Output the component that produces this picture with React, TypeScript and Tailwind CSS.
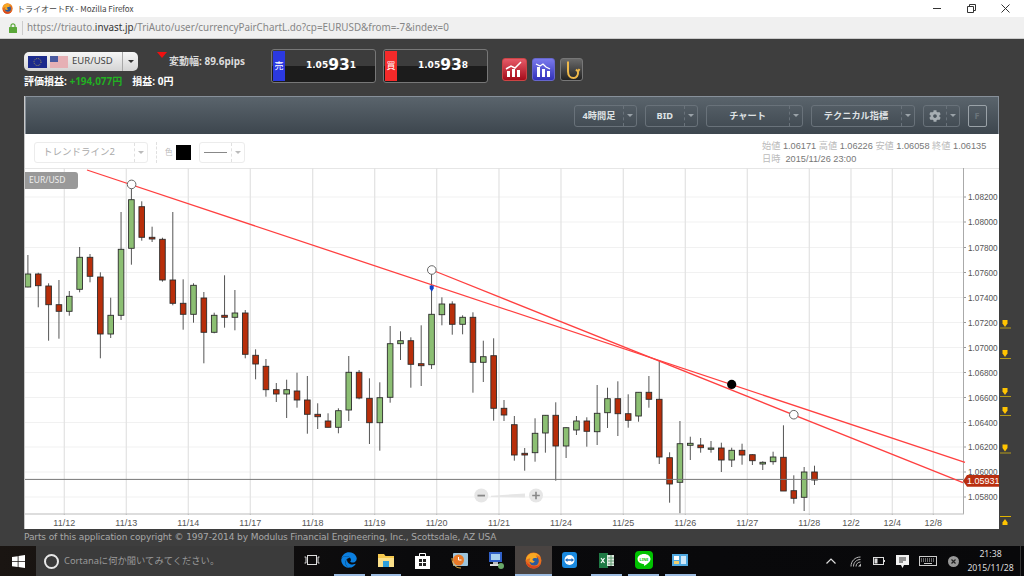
import { FaCog, FaEdge } from "react-icons/fa";

// wickTop, wickBottom, bodyTop, bodyBottom, up (1 = green)
const candles: number[][] = [
  [255, 287.3, 274, 287, 1], [272.7, 307.3, 274, 285.7, 0], [283.3, 340.7, 286, 304.7, 0], [280, 338.7, 304.7, 311.3, 0],
  [291, 315.7, 296.3, 311.3, 1], [247, 292.3, 257.3, 289.3, 1], [254, 282.3, 257.3, 276.3, 0], [272.3, 358.3, 277, 334, 0],
  [297.7, 338, 315.3, 334, 1], [212, 320, 249.3, 315.3, 1], [188.3, 264.7, 199.7, 248.3, 1], [201.3, 240.7, 206.7, 237.3, 0],
  [226.7, 242, 237.3, 239, 0], [237.7, 281.7, 239.3, 280, 0], [212, 305.3, 280, 303.3, 0], [279.3, 329.7, 303.3, 314.3, 0],
  [283.3, 322.7, 285.3, 314.3, 1], [292, 363.3, 298, 332.3, 0], [312.7, 333.3, 315.3, 332.3, 1], [275.3, 327.7, 315.3, 317.3, 0],
  [290, 330.3, 313, 317.3, 1], [310, 358.3, 313, 354.3, 0], [349.3, 379.3, 355.3, 364, 0], [359, 396.7, 366.3, 389.7, 0],
  [383, 402, 389.7, 394, 0], [379.7, 418, 389.7, 394, 1], [372.7, 407.7, 391, 400, 0], [376, 433.7, 400, 414.3, 0],
  [403.3, 429, 414.3, 416.7, 0], [413.3, 427.3, 421, 427.3, 0], [408.3, 433.3, 410.7, 427.3, 1], [356, 421, 372.3, 410, 1],
  [370, 399.3, 372.3, 398, 0], [378.3, 444, 398.3, 422.7, 0], [382.3, 450.7, 397.7, 422.7, 1], [326, 402.7, 343.7, 397.3, 1],
  [331.3, 360, 340.7, 343.7, 1], [337.3, 387.7, 340.7, 364.3, 0], [325.3, 386, 363.7, 365.7, 0], [274, 369, 314.3, 364.7, 1],
  [297.3, 325.3, 304, 314.7, 1], [301.3, 334.7, 304, 324.3, 0], [315.3, 334.3, 317.3, 324.3, 1], [312.3, 392.7, 317.3, 362.3, 0],
  [340.7, 382, 356.7, 362.3, 1], [338.3, 420.7, 355.7, 408.3, 0], [400, 421, 408.3, 415, 0], [416, 460.7, 424.7, 455, 0],
  [448, 470.7, 453.3, 455, 0], [418.3, 461.7, 433.3, 452.7, 1], [415, 452.7, 415.3, 433, 1], [402.3, 480.7, 415.3, 446, 0],
  [427.3, 458, 427.7, 446, 1], [416, 435, 421, 430, 1], [417.3, 446.7, 421, 431.3, 0], [385, 445, 413.3, 431.7, 1],
  [387.7, 428, 398.7, 412.7, 1], [381.3, 436, 398.7, 413.7, 0], [394.3, 427.7, 413.7, 420.3, 0], [392.3, 421.7, 392.3, 416, 1],
  [376, 407.7, 392.3, 399.3, 0], [360.7, 464, 399.3, 457, 0], [452.3, 502.7, 457.7, 484, 0], [421, 513.3, 443.7, 482.3, 1],
  [436.7, 460, 443.3, 445.3, 1], [438, 452.7, 445, 447.7, 0], [441, 452.7, 448, 449.3, 1], [442.7, 472, 448, 460, 0],
  [447.7, 467, 450.3, 460, 1], [443.7, 464.7, 450.3, 455, 0], [454.3, 465, 454.7, 460.7, 0], [461.3, 470, 462.3, 464, 1],
  [451.7, 464.7, 457, 461.7, 1], [425.3, 491, 457.3, 491, 0], [475.3, 503.7, 490.7, 498.3, 0], [467, 511, 472, 497.3, 1],
  [465.7, 485, 472, 480, 0],
];

const dateLines: [number, string][] = [
  [64.3, "11/12"], [126.3, "11/13"], [188.3, "11/14"], [250.3, "11/17"], [312.7, "11/18"], [374.7, "11/19"],
  [436.7, "11/20"], [499, "11/21"], [561, "11/24"], [623.3, "11/25"], [685.3, "11/26"], [747.3, "11/27"],
  [809.3, "11/28"], [851, "12/2"], [892.3, "12/4"], [933.3, "12/8"],
];

const priceLines: [number, string][] = [
  [197, "1.08200"], [222, "1.08000"], [247.5, "1.07800"], [272.5, "1.07600"], [297.5, "1.07400"], [322.5, "1.07200"],
  [347.5, "1.07000"], [372.5, "1.06800"], [397.5, "1.06600"], [422.5, "1.06400"], [447, "1.06200"], [472, "1.06000"],
  [497, "1.05800"],
];

const Chart = () => (
  <svg viewBox="25 168 974 347" width={974} height={347} className="block font-[family-name:'Liberation_Sans',sans-serif]">
    <line x1={25} x2={999} y1={168.5} y2={168.5} stroke="#e6e6e6" />
    {priceLines.map(([y, label]) => (
      <g key={label}>
        <line x1={25} x2={963} y1={y} y2={y} stroke="#f1f1f1" />
        <line x1={963} x2={966} y1={y} y2={y} stroke="#999" />
        <text x={968} y={y + 3} fontSize={8.2} fill="#555">{label}</text>
      </g>
    ))}
    {dateLines.map(([x, label]) => (
      <line key={label} x1={x} x2={x} y1={168} y2={514} stroke="#e2e2e2" strokeWidth={1.2} />
    ))}
    {candles.map(([wt, wb, bt, bb, up], i) => {
      const x = 27.9 + 10.35 * i;
      return (
        <g key={i}>
          <line x1={x} x2={x} y1={wt} y2={wb} stroke="#555" />
          <rect x={x - 2.8} y={bt} width={5.6} height={bb - bt} fill={up ? "#8cbf73" : "#b82e0a"} stroke="#2c2c2c" strokeWidth={0.9} />
        </g>
      );
    })}
    <line x1={25} x2={963} y1={479.4} y2={479.4} stroke="#777" />
    <line x1={963.5} x2={963.5} y1={168} y2={514} stroke="#aaa" />
    <line x1={25} x2={964} y1={514} y2={514} stroke="#bbb" />
    <line x1={87} y1={170} x2={965} y2={462.3} stroke="#ff4040" strokeWidth={1.3} />
    <line x1={432} y1={270} x2={963} y2={482.7} stroke="#ff4040" strokeWidth={1.3} />
    <circle cx={131.6} cy={184.4} r={4.3} fill="#fff" stroke="#666" />
    <circle cx={431.8} cy={270} r={4.3} fill="#fff" stroke="#666" />
    <circle cx={793.8} cy={414.7} r={4.3} fill="#fff" stroke="#666" />
    <circle cx={731.7} cy={384.4} r={4.6} fill="#000" />
    <path d="M429.7 285.5h4v3l-2 3.2-2-3.2z" fill="#1144cc" />
    <circle cx={481.3} cy={495.5} r={7} fill="#e6e6e6" />
    <rect x={477.5} y={494.7} width={7.5} height={1.8} fill="#888" />
    <path d="M491 495.7L525 493.5V497.5L491 497z" fill="#e6e6e6" />
    <circle cx={536} cy={495.5} r={7} fill="#e6e6e6" />
    <path d="M532.2 494.7h3v-3h1.6v3h3v1.6h-3v3h-1.6v-3h-3z" fill="#888" />
    <path d="M963 481l4-6h32v11.7h-32z" fill="#b92f10" />
    <text x={967} y={484} fontSize={9} fill="#fff">1.05931</text>
    {dateLines.map(([x, label]) => (
      <line key={label} x1={x} x2={x} y1={514} y2={515} stroke="#bbb" />
    ))}
  </svg>
);

const SplitButton = ({ w, arrow, children }: { w: string; arrow: string; children: React.ReactNode }) => (
  <div className={`flex h-[22px] rounded-[3px] border border-[#69727a] text-[#dfe2e4] text-[9.2px] font-bold ${w}`}>
    <div className="flex-1 flex items-center justify-center">{children}</div>
    <div className={`flex items-center justify-center border-l border-dashed border-[#69727a] ${arrow}`}>
      <div className="w-0 h-0 border-x-[3px] border-x-transparent border-t-[3px] border-t-[#9aa2a8]" />
    </div>
  </div>
);

const PriceBox = ({ color, label, last }: { color: string; label: string; last: string }) => (
  <div className="relative w-[105px] h-[34px] rounded-[3px] border border-[#777] flex bg-[linear-gradient(#3c3c3c_0,#3c3c3c_50%,#1c1c1c_50%,#1c1c1c_100%)]">
    <div className={`w-[12px] my-px ml-px flex items-center justify-center text-white text-[9px] ${color}`}>{label}</div>
    <div className="flex-1 flex items-center justify-end pr-[19px] text-white font-bold text-[9px] font-[family-name:'DejaVu_Sans',sans-serif]">
      <span>1.05</span>
      <span className="text-[15.5px] leading-none">93</span>
      <span>{last}</span>
    </div>
  </div>
);

const FirefoxIcon = ({ size }: { size: number }) => (
  <svg width={size} height={size} viewBox="0 0 16 16">
    <circle cx={8} cy={8} r={7.5} fill="#e8701f" />
    <circle cx={8.6} cy={8.4} r={4.4} fill="#2b5a9c" />
    <path d="M1 8c0-4 3-7 7-7 3 0 5.500 1.500 6.500 4-1.500-1.500-3-2-4.500-1.500 1 .5 1.500 1.500 1.200 2.500-1-.5-3.200-.5-4 .5-.5 1 .5 2 2 2.200-1 1.500-3 2-4.200.8C3.500 9.500 4 7 5 6c-1.500 0-3.500.5-4 2z" fill="#f7a823" />
    <path d="M1 9c.5 4 3.500 6.500 7 6.500 3 0 6-2 7-5.500-1.500 2.500-4 3.800-6.500 3.300C5.500 13 3 12 1 9z" fill="#d8431d" />
  </svg>
);

const TaskCell = ({ active, highlight, children }: { active?: boolean; highlight?: boolean; children: React.ReactNode }) => (
  <div className={`w-[36.8px] h-full flex flex-col ${highlight ? "bg-[#4a4442]" : ""}`}>
    <div className="flex-1 flex items-center justify-center">{children}</div>
    <div className={`h-[2px] ${highlight ? "" : "mx-[3px]"} ${active ? "bg-[#9cbbe0]" : ""}`} />
  </div>
);

const TrayCell = ({ w, children }: { w: string; children: React.ReactNode }) => (
  <div className={`h-full flex items-center justify-center ${w}`}>{children}</div>
);

const markers: { y: number; lineY: number }[] = [
  { y: 320, lineY: 328 },
  { y: 350, lineY: 358.5 },
  { y: 388, lineY: 396.5 },
  { y: 407, lineY: 415.5 },
  { y: 444.5, lineY: 453 },
];

const MarkerStrip = () => (
  <svg viewBox="999 96 25 432" width={25} height={432} className="block">
    {markers.map((m) => (
      <g key={m.y}>
        <path d={`M1002.500 ${m.y}h5v3.500l-2.500 3.500-2.500-3.500z`} fill="#ffc400" />
        <line x1={1000} x2={1011} y1={m.lineY} y2={m.lineY} stroke="#b39a1a" />
      </g>
    ))}
    <line x1={1000} x2={1011} y1={516.5} y2={516.5} stroke="#e0b400" />
    <path d="M1005 519l2.500 3.500v2.500h-5v-2.500z" fill="#ffc400" />
  </svg>
);

const App = () => {
  return (
    <div className="w-[1024px] h-[576px] overflow-hidden flex flex-col bg-[#3e3e3e] font-[family-name:'Noto_Sans','Noto_Sans_CJK_JP',sans-serif]">
      {/* title bar */}
      <div className="h-[17px] bg-white flex items-center pl-[2px] text-[8px] text-[#444] shrink-0">
        <FirefoxIcon size={11} />
        <span className="ml-[4px] font-[family-name:'Noto_Sans_CJK_JP',sans-serif]">トライオートFX - Mozilla Firefox</span>
        <div className="ml-auto flex items-center text-[#333]">
          <div className="w-[34px] flex justify-center"><div className="w-[8px] h-px bg-[#333]" /></div>
          <div className="w-[34px] flex justify-center">
            <svg width={9} height={9} viewBox="0 0 9 9" fill="none" stroke="#333"><path d="M.5 2.500h6v6h-6zM2.500 2.500v-2h6v6h-2" /></svg>
          </div>
          <div className="w-[34px] flex justify-center mr-[2px]">
            <svg width={9} height={9} viewBox="0 0 9 9" stroke="#333"><path d="M.5.5l8 8M8.500.5l-8 8" /></svg>
          </div>
        </div>
      </div>
      {/* url bar */}
      <div className="h-[22px] bg-[#f0f0f0] border-b border-[#ccc] flex items-center pl-[9px] text-[9.85px] text-[#858585] shrink-0">
        <svg width={8} height={10} viewBox="0 0 8 10">
          <path d="M2 4V2.800a2 2 0 0 1 4 0V4" fill="none" stroke="#5ba83a" strokeWidth={1.2} />
          <rect y={4} width={8} height={6} rx={0.5} fill="#5ba83a" />
        </svg>
        <div className="ml-[5px] w-px h-[14px] bg-[#ccc]" />
        <span className="ml-[4px]">https://triauto.<span className="text-[#333]">invast.jp</span>/TriAuto/user/currencyPairChartL.do?cp=EURUSD&amp;from=-7&amp;index=0</span>
      </div>

      <div className="flex-1 flex flex-col min-h-0">
        {/* header */}
        <div className="h-[57px] pl-[24px] flex items-start shrink-0">
          <div className="w-[247px] pt-[13px] text-[10px] font-bold text-[#dcdcdc]">
            <div className="flex items-center">
              <div className="w-[114px] h-[19px] rounded-[5px] bg-[linear-gradient(#f6f6f6,#d4d4d4)] flex items-center pl-[4px] font-normal text-[9.5px] text-[#444]">
                <svg width={19} height={12} viewBox="0 0 19 12">
                  <rect width={19} height={12} fill="#1b2a8c" />
                  <circle cx={9.500} cy={6} r={3.500} fill="none" stroke="#c9b845" strokeWidth={0.8} strokeDasharray="1 1.100" />
                </svg>
                <svg width={18} height={12} viewBox="0 0 18 12" className="ml-[3px]">
                  <rect width={18} height={12} fill="#f4f0f0" />
                  <path d="M0 1h18M0 3h18M0 5h18M0 7h18M0 9h18M0 11h18" stroke="#d8707a" />
                  <rect width={8} height={6} fill="#4a5aa0" />
                </svg>
                <span className="ml-[4px] w-[50px]">EUR/USD</span>
                <div className="h-full w-px bg-[#a8a8a8]" />
                <div className="flex-1 flex justify-center">
                  <div className="w-0 h-0 border-x-[3.5px] border-x-transparent border-t-[3.5px] border-t-[#333]" />
                </div>
              </div>
              <div className="ml-[19px] -mt-[13px] w-0 h-0 border-x-[5px] border-x-transparent border-t-[6px] border-t-[#f01010]" />
              <span className="ml-[2px] -mt-[1px] text-[10px] whitespace-nowrap">変動幅: 89.6pips</span>
            </div>
            <div className="mt-[3px] whitespace-nowrap text-[10px] text-white">
              評価損益: <span className="text-[#22b022]">+194,077円</span>
              <span className="ml-[10px]">損益: 0円</span>
            </div>
          </div>
          <div className="mt-[10px] flex gap-[7px]">
            <PriceBox color="bg-[#2b39e0]" label="売" last="1" />
            <PriceBox color="bg-[#f52a2a]" label="買" last="8" />
          </div>
          <div className="mt-[19px] ml-[14px] flex gap-[5px]">
            <div className="w-[25px] h-[23px] rounded-[3px] bg-[linear-gradient(#e65a68,#a50c1a)] border border-[#c44] flex items-center justify-center">
              <svg width={19} height={17} viewBox="0 0 19 17" fill="#fff">
                <rect x={2} y={10} width={3} height={6} /><rect x={7} y={8} width={3} height={8} /><rect x={12} y={9} width={3} height={7} />
                <path d="M1 8l5-3 4 2 6-6" fill="none" stroke="#fff" strokeWidth={1.5} />
              </svg>
            </div>
            <div className="w-[23px] h-[23px] rounded-[3px] bg-[linear-gradient(#7a7aec,#3232bc)] border border-[#66c] flex items-center justify-center">
              <svg width={17} height={17} viewBox="0 0 17 17" fill="#fff">
                <rect x={2} y={6} width={3} height={10} /><rect x={7} y={8} width={3} height={8} /><rect x={12} y={10} width={3} height={6} />
                <path d="M1 3l4 2 3-2 3 3 4 2" fill="none" stroke="#fff" strokeWidth={1.3} />
              </svg>
            </div>
            <div className="w-[23px] h-[23px] rounded-[3px] bg-[linear-gradient(#6a6a6a,#222)] border border-[#777] flex items-center justify-center">
              <svg width={19} height={20} viewBox="0 0 19 20" fill="none">
                <path d="M6 1.500v10c0 4 2.500 6.500 5.500 6.500s5-3 4.500-6.500L14 9.500M16 11.500l1.500-2.500" stroke="#eeb84a" strokeWidth={2} />
              </svg>
            </div>
          </div>
        </div>

        {/* chart row */}
        <div className="flex pl-[24px]">
          <div className="w-[975px] flex flex-col border-l border-[#c8c8c8] bg-white">
            <div className="h-[38px] flex items-center justify-end gap-2 pr-[11.5px] border-t border-x border-[#87909a] bg-[linear-gradient(#5a646c,#3d464e)]">
              <SplitButton w="w-[63px]" arrow="w-[13px]">4時間足</SplitButton>
              <SplitButton w="w-[52.5px]" arrow="w-[13px]">BID</SplitButton>
              <SplitButton w="w-[97px]" arrow="w-[13px]">チャート</SplitButton>
              <SplitButton w="w-[104px]" arrow="w-[13px]">テクニカル指標</SplitButton>
              <SplitButton w="w-[37px]" arrow="w-[13px]"><FaCog size={12} color="#a7aeb3" /></SplitButton>
              <div className="w-[19px] h-[22px] rounded-[2px] border border-[#9aa2a8] flex items-center justify-center text-[9px] font-bold text-[#6b747b]">F</div>
            </div>
            <div className="h-[34px] flex items-center pl-[9px] pr-[14px] pt-[3px]">
              <div className="w-[114px] h-[21px] rounded-[3px] border border-[#ececec] flex items-center text-[9.5px] text-[#aaa]">
                <span className="flex-1 pl-[8px]">トレンドライン2</span>
                <div className="w-[13px] h-full border-l border-dashed border-[#e0e0e0] flex items-center justify-center">
                  <div className="w-0 h-0 border-x-[3px] border-x-transparent border-t-[3px] border-t-[#bbb]" />
                </div>
              </div>
              <div className="ml-[8px] h-[21px] border-l border-dashed border-[#e0e0e0]" />
              <span className="ml-[8px] text-[7.5px] text-[#bbb]">色</span>
              <div className="ml-[3px] w-[15px] h-[15px] bg-black" />
              <div className="ml-[8px] w-[46px] h-[21px] rounded-[3px] border border-[#ececec] flex items-center">
                <div className="flex-1 flex justify-center"><div className="w-[23px] h-px bg-[#888]" /></div>
                <div className="w-[13px] h-full border-l border-dashed border-[#e0e0e0] flex items-center justify-center">
                  <div className="w-0 h-0 border-x-[3px] border-x-transparent border-t-[3px] border-t-[#bbb]" />
                </div>
              </div>
              <div className="ml-auto w-[223px] text-[9.2px] leading-[12.5px] text-[#777] font-[family-name:'Liberation_Sans','Noto_Sans_CJK_JP',sans-serif]">
                <div className="whitespace-nowrap">
                  <span className="text-[#bbb]">始値</span> 1.06171 <span className="text-[#bbb]">高値</span> 1.06226 <span className="text-[#bbb]">安値</span> 1.06058 <span className="text-[#bbb]">終値</span> 1.06135
                </div>
                <div className="whitespace-nowrap"><span className="text-[#bbb]">日時</span>&nbsp; 2015/11/26 23:00</div>
              </div>
            </div>
            <div className="relative">
              <Chart />
              <div className="absolute left-0 top-[4px] w-[53px] h-[17px] rounded-r-[3px] bg-[#999] flex items-center pl-[4px] text-[8.5px] text-[#eee]">EUR/USD</div>
            </div>
            <div className="h-[14px] relative font-[family-name:'Liberation_Sans',sans-serif] text-[9px] text-[#555]">
              {dateLines.map(([x, label]) => (
                <span key={label} className="absolute top-[2px] -translate-x-1/2" style={{ left: x - 25 }}>{label}</span>
              ))}
            </div>
          </div>
          <div className="flex-1 min-w-0"><MarkerStrip /></div>
        </div>

        <div className="pl-[24px] pt-[1px] text-[9px] leading-[15px] text-[#a8a8a8] whitespace-nowrap font-[family-name:'DejaVu_Sans',sans-serif] tracking-[-0.1px]">
          Parts of this application copyright © 1997-2014 by Modulus Financial Engineering, Inc., Scottsdale, AZ USA
        </div>
      </div>

      {/* taskbar */}
      <div className="h-[30px] shrink-0 bg-[linear-gradient(90deg,#1a1512,#0a0a0c_40%,#08080a)] flex items-center text-white">
        <div className="w-[36px] h-full flex items-center justify-center">
          <svg width={13} height={13} viewBox="0 0 13 13" fill="#fff">
            <path d="M0 2l5.700-.8v5H0zM6.500 1.100L13 0v6.200H6.500zM0 7h5.700v5L0 11.200zM6.500 7H13v6l-6.500-.9z" />
          </svg>
        </div>
        <div className="w-[258px] h-full bg-[#3b3b3b] flex items-center pl-[8px]">
          <div className="w-[15px] h-[15px] rounded-full border-2 border-[#e8e8e8]" />
          <span className="ml-[5px] text-[9.3px] text-[#999] whitespace-nowrap font-[family-name:'Noto_Sans','Noto_Sans_CJK_JP',sans-serif]">Cortanaに何か聞いてみてください。</span>
        </div>
        <TaskCell>
          <svg width={16} height={10} viewBox="0 0 16 10" fill="none" stroke="#ddd"><rect x={3.500} y={.5} width={9} height={9} /><path d="M.5 2h1.500v6H.5M15.500 2H14v6h1.500" /></svg>
        </TaskCell>
        <TaskCell active><FaEdge size={16} color="#0b7fe0" /></TaskCell>
        <TaskCell active>
          <svg width={16} height={14} viewBox="0 0 16 14">
            <path d="M0 1h6l1.500 2H16v11H0z" fill="#f6c94e" /><rect y={5} width={16} height={9} fill="#fbe08a" /><rect x={5} y={8} width={6} height={6} fill="#2fa0dc" />
          </svg>
        </TaskCell>
        <TaskCell>
          <svg width={15} height={17} viewBox="0 0 15 17" fill="#fff">
            <path d="M0 4h15v13H0z" /><path d="M4.500 4V1.500h6V4" fill="none" stroke="#fff" />
            <path d="M4 7h3v3H4zM8 7h3v3H8zM4 11h3v3H4zM8 11h3v3H8z" fill="#222" />
          </svg>
        </TaskCell>
        <TaskCell>
          <svg width={17} height={17} viewBox="0 0 17 17">
            <rect x={2} y={1} width={15} height={13} rx={1} fill="#9cc4dc" /><circle cx={7.500} cy={8} r={5.500} fill="#ea7a28" />
            <path d="M7.500 5v3h3" stroke="#fff" fill="none" /><path d="M1 6c0 6 3 10 9 10" stroke="#e8b040" fill="none" />
          </svg>
        </TaskCell>
        <TaskCell>
          <svg width={16} height={18} viewBox="0 0 16 18">
            <rect x={1} y={1} width={13} height={10} fill="#3060c8" /><rect x={3} y={3} width={9} height={6} fill="#a8d0f0" />
            <rect x={5} y={11} width={5} height={2} fill="#bbb" /><rect x={2} y={13} width={11} height={2} fill="#ddd" /><circle cx={13} cy={15} r={3} fill="#6aa868" />
          </svg>
        </TaskCell>
        <TaskCell active highlight><FirefoxIcon size={17} /></TaskCell>
        <TaskCell>
          <svg width={15} height={16} viewBox="0 0 15 16">
            <rect width={15} height={16} rx={3} fill="#1a8ae0" /><circle cx={7.500} cy={8} r={5} fill="#fff" />
            <path d="M3 8l2.500-2v1.300h4V6L12 8 9.500 10V8.700h-4V10z" fill="#1a6ac0" />
          </svg>
        </TaskCell>
        <TaskCell active>
          <svg width={17} height={17} viewBox="0 0 17 17">
            <rect x={1} y={1} width={9} height={15} fill="#1f7a45" /><rect x={9} y={3} width={7} height={11} fill="#dfe8e0" />
            <path d="M10 6h6M10 9h6M10 12h6M13 3v11" stroke="#5e9a70" /><path d="M3 6l3.500 5M6.500 6L3 11" stroke="#fff" strokeWidth={1.2} />
          </svg>
        </TaskCell>
        <TaskCell active>
          <svg width={18} height={18} viewBox="0 0 18 18">
            <rect width={18} height={18} rx={4} fill="#00c300" />
            <path d="M9 3c3.800 0 6.500 2.200 6.500 5 0 3-4 5.500-6.500 7 .5-1.500 0-2-1-2C4.500 12.500 2.500 10.500 2.500 8c0-2.800 2.700-5 6.500-5z" fill="#fff" />
            <text x={9} y={9.500} textAnchor="middle" fontSize={3.800} fontWeight={700} fill="#00c300">LINE</text>
          </svg>
        </TaskCell>
        <TaskCell active>
          <svg width={16} height={12} viewBox="0 0 16 12">
            <rect width={16} height={12} fill="#4fa8e0" /><rect x={2} y={2} width={5} height={4} fill="#fff" /><rect x={9} y={2} width={5} height={8} fill="#cfe8f8" /><rect x={2} y={7} width={5} height={3} fill="#f0d070" />
          </svg>
        </TaskCell>

        <div className="ml-auto h-full flex items-center">
          <TrayCell w="w-[25px]">
            <svg width={10} height={6} viewBox="0 0 10 6" fill="none" stroke="#ddd" strokeWidth={1.2}><path d="M.5 5.500L5 1l4.500 4.500" /></svg>
          </TrayCell>
          <TrayCell w="w-[24px]">
            <svg width={11} height={11} viewBox="0 0 11 11" fill="none" stroke="#bbb"><path d="M1 10.500C1 5 5 1 10.500 1M3.500 10.500c0-4 3-7 7-7M6 10.500c0-2.500 2-4.500 4.500-4.500" /><path d="M8 10.500h3v-3" fill="#bbb" stroke="none" /></svg>
          </TrayCell>
          <TrayCell w="w-[23px]">
            <svg width={12} height={8} viewBox="0 0 12 8" fill="none" stroke="#ddd"><rect x={.5} y={.5} width={10} height={7} /><rect x={1.500} y={1.500} width={3} height={5} fill="#ddd" stroke="none" /><path d="M11.500 3v2" /></svg>
          </TrayCell>
          <TrayCell w="w-[25px]">
            <svg width={13} height={13} viewBox="0 0 13 13" fill="#f2f2f2"><path d="M0 0h13v10H8l-1.500 3L5 10H0z" /><path d="M3 3h7M3 5h7M3 7h4" stroke="#333" /></svg>
          </TrayCell>
          <TrayCell w="w-[26px]">
            <svg width={18} height={10} viewBox="0 0 18 10" fill="none" stroke="#ccc"><rect x={.5} y={.5} width={17} height={9} /><path d="M2 3h14M2 5h14" strokeDasharray="1 1" /><path d="M5 7.500h8" /></svg>
          </TrayCell>
          <TrayCell w="w-[24px]">
            <svg width={11} height={11} viewBox="0 0 11 11"><circle cx={5.500} cy={5.500} r={5.500} fill="#999" /><path d="M3.500 3.500l4 4M7.500 3.500l-4 4" stroke="#222" strokeWidth={1.2} /></svg>
          </TrayCell>
          <div className="w-[51px] text-center text-[8.7px] leading-[14px] text-[#ddd] font-[family-name:'Noto_Sans',sans-serif]">
            <div>21:38</div>
            <div className="whitespace-nowrap">2015/11/28</div>
          </div>
          <div className="ml-[4px] w-[4px] h-full border-l border-[#333]" />
        </div>
      </div>
    </div>
  );
};

export default App;
